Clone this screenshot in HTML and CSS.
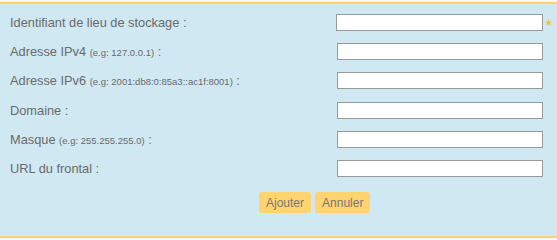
FILE: index.html
```html
<!DOCTYPE html>
<html>
<head>
<meta charset="utf-8">
<link rel="stylesheet" href="styles.css">
</head>
<body>
<div class="panel">
  <form class="form">
    <div class="row">
      <label class="label">Identifiant de lieu de stockage :</label>
      <span class="field"><input class="input input-first" type="text"><svg class="star" viewBox="0 0 10 10" width="7" height="7"><polygon points="5,0 6.2,3.6 10,3.7 7,6 8.1,9.7 5,7.5 1.9,9.7 3,6 0,3.7 3.8,3.6" fill="#f7c430"/></svg></span>
    </div>
    <div class="row">
      <label class="label">Adresse IPv4 <small class="hint">(e.g: 127.0.0.1)</small> :</label>
      <span class="field"><input class="input" type="text"></span>
    </div>
    <div class="row">
      <label class="label">Adresse IPv6 <small class="hint">(e.g: 2001:db8:0:85a3::ac1f:8001)</small> :</label>
      <span class="field"><input class="input" type="text"></span>
    </div>
    <div class="row">
      <label class="label">Domaine :</label>
      <span class="field"><input class="input" type="text"></span>
    </div>
    <div class="row">
      <label class="label">Masque <small class="hint">(e.g: 255.255.255.0)</small> :</label>
      <span class="field"><input class="input" type="text"></span>
    </div>
    <div class="row">
      <label class="label">URL du frontal :</label>
      <span class="field"><input class="input" type="text"></span>
    </div>
    <div class="buttons">
      <button class="btn" type="button">Ajouter</button>
      <button class="btn" type="button">Annuler</button>
    </div>
  </form>
</div>
</body>
</html>
```
FILE: styles.css
```css
html, body {
  margin: 0;
  padding: 0;
  background: #f7f7f7;
}
body {
  font-family: "Liberation Sans", Arial, sans-serif;
  height: 240px;
  overflow: hidden;
}
.panel {
  margin-top: 2px;
  height: 232px;
  background: #d0e8f2;
  border-top: 2px solid #ffd36e;
  border-bottom: 2px solid #ffd36e;
}
.form {
  padding-top: 10px;
  display: flex;
  flex-direction: column;
  gap: 12.2px;
}
.row {
  display: flex;
  align-items: center;
  height: 17px;
  padding-left: 10px;
}
.label {
  width: 327px;
  font-size: 12.8px;
  color: #6a6a6a;
  white-space: nowrap;
}
.hint {
  font-size: 9.5px;
}
.field {
  display: flex;
  align-items: center;
  position: relative;
}
.input {
  box-sizing: border-box;
  width: 206px;
  height: 17px;
  margin: 0;
  padding: 0 3px;
  border: 1px solid #9a9a9a;
  background: #fff;
  outline: none;
}
.input-first {
  width: 207px;
  margin-left: -1px;
}
.star {
  position: absolute;
  left: 208px;
  top: 5px;
}
.buttons {
  display: flex;
  gap: 4px;
  padding-left: 259px;
  margin-top: 3px;
}
.btn {
  height: 21px;
  padding: 0 7px;
  border: none;
  border-radius: 3px;
  background: #ffd36e;
  color: #777;
  font-family: "Liberation Sans", Arial, sans-serif;
  font-size: 12px;
}
```
